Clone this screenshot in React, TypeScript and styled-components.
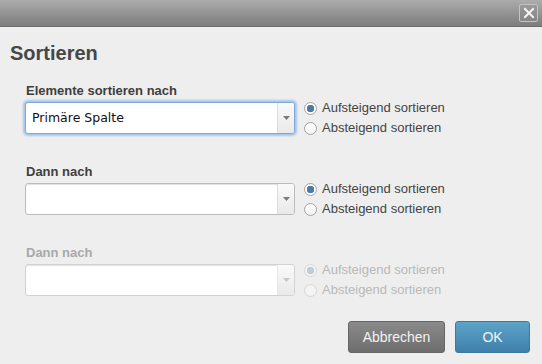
import styled, { createGlobalStyle } from "styled-components";

const GlobalStyle = createGlobalStyle`
    body {
        margin: 0;
        background: #eeeeee;
        font-family: "Liberation Sans", Arial, sans-serif;
    }
`;

type SortSection = {
    label: string;
    value: string;
    focused?: boolean;
    disabled?: boolean;
};

const sections: SortSection[] = [
    { label: "Elemente sortieren nach", value: "Primäre Spalte", focused: true },
    { label: "Dann nach", value: "" },
    { label: "Dann nach", value: "", disabled: true },
];

const Radio = ({
    checked,
    disabled,
    children,
}: {
    checked?: boolean;
    disabled?: boolean;
    children: string;
}) => (
    <RadioRow disabled={disabled}>
        <RadioCircle checked={checked} disabled={disabled} />
        {children}
    </RadioRow>
);

export default function App() {
    return (
        <>
            <GlobalStyle />
            <Dialog>
                <TitleBar>
                    <CloseButton>
                        <svg width="12" height="12" viewBox="0 0 12 12">
                            <path
                                d="M2 2 L10 10 M10 2 L2 10"
                                stroke="#f4f4f4"
                                strokeWidth="2"
                                strokeLinecap="square"
                            />
                        </svg>
                    </CloseButton>
                </TitleBar>
                <Heading>Sortieren</Heading>
                <Form>
                    {sections.map((s, ind) => (
                        <Section key={ind}>
                            <Label disabled={s.disabled}>{s.label}</Label>
                            <Row>
                                <Select focused={s.focused} disabled={s.disabled}>
                                    <SelectValue>{s.value}</SelectValue>
                                    <SelectArrow disabled={s.disabled}>
                                        <svg width="7" height="4" viewBox="0 0 7 4">
                                            <path d="M0 0 L7 0 L3.5 4 Z" fill="currentColor" />
                                        </svg>
                                    </SelectArrow>
                                </Select>
                                <RadioGroup>
                                    <Radio checked disabled={s.disabled}>
                                        Aufsteigend sortieren
                                    </Radio>
                                    <Radio disabled={s.disabled}>Absteigend sortieren</Radio>
                                </RadioGroup>
                            </Row>
                        </Section>
                    ))}
                </Form>
                <Footer>
                    <Button>Abbrechen</Button>
                    <Button primary>OK</Button>
                </Footer>
            </Dialog>
        </>
    );
}

const Dialog = styled.div`
    width: 542px;
    height: 364px;
    background: #eeeeee;
    display: flex;
    flex-direction: column;
    box-sizing: border-box;
`;

const TitleBar = styled.div`
    height: 27px;
    flex-shrink: 0;
    background: linear-gradient(#acacac, #7c7c7c);
    border-bottom: 1px solid #6e6e6e;
    box-sizing: border-box;
    display: flex;
    justify-content: flex-end;
    align-items: center;
    padding-right: 4px;
`;

const CloseButton = styled.div`
    width: 19px;
    height: 18px;
    box-sizing: border-box;
    border: 1px solid #c4c4c4;
    border-radius: 2px;
    background: linear-gradient(#9a9a9a, #868686);
    display: flex;
    align-items: center;
    justify-content: center;
`;

const Heading = styled.h1`
    margin: 14px 0 0 10px;
    font-size: 20px;
    line-height: 24px;
    font-weight: 700;
    color: #474747;
`;

const Form = styled.div`
    margin-top: 18px;
    padding-left: 25px;
    display: flex;
    flex-direction: column;
    gap: 28px;
`;

const Section = styled.div`
    display: flex;
    flex-direction: column;
    gap: 3px;
`;

const Label = styled.div<{ disabled?: boolean }>`
    padding-left: 1px;
    font-size: 13px;
    line-height: 16px;
    font-weight: 700;
    color: ${(p) => (p.disabled ? "#a9a9a9" : "#3e3e3e")};
`;

const Row = styled.div`
    display: flex;
    align-items: flex-start;
`;

const Select = styled.div<{ focused?: boolean; disabled?: boolean }>`
    width: 270px;
    height: 32px;
    box-sizing: border-box;
    display: flex;
    background: #ffffff;
    border: 1px solid ${(p) => (p.focused ? "#7ea9d6" : p.disabled ? "#d2d2d2" : "#bdbdbd")};
    border-radius: 3px;
    box-shadow: ${(p) =>
        p.focused
            ? "0 0 2px 2px #a6c6ea"
            : "inset 0 1px 1px rgba(0, 0, 0, 0.12)"};
`;

const SelectValue = styled.div`
    flex: 1;
    padding-left: 6px;
    font-family: "DejaVu Sans", sans-serif;
    font-size: 12.5px;
    line-height: 30px;
    color: #111;
`;

const SelectArrow = styled.div<{ disabled?: boolean }>`
    width: 16px;
    border-left: 1px solid ${(p) => (p.disabled ? "#e6e6e6" : "#dcdcdc")};
    background: linear-gradient(#fafafa, #e9e9e9);
    border-radius: 0 2px 2px 0;
    display: flex;
    align-items: center;
    justify-content: center;
    color: ${(p) => (p.disabled ? "#c8c8c8" : "#7a7a7a")};
`;

const RadioGroup = styled.div`
    margin-left: 9px;
    margin-top: -2px;
    display: flex;
    flex-direction: column;
    gap: 4px;
`;

const RadioRow = styled.div<{ disabled?: boolean }>`
    display: flex;
    align-items: center;
    gap: 5px;
    font-size: 13px;
    line-height: 16px;
    color: ${(p) => (p.disabled ? "#b9b9b9" : "#444444")};
`;

const RadioCircle = styled.span<{ checked?: boolean; disabled?: boolean }>`
    width: 13px;
    height: 13px;
    box-sizing: border-box;
    border-radius: 50%;
    border: 1px solid ${(p) => (p.disabled ? "#d6d6d6" : "#a4a4a4")};
    background: ${(p) =>
        p.checked
            ? p.disabled
                ? "radial-gradient(circle, #c2ccd6 0 3.5px, #f4f4f4 4px)"
                : "radial-gradient(circle, #4b7aa6 0 3.5px, #ffffff 4px)"
            : p.disabled
            ? "#f4f4f4"
            : "linear-gradient(#ffffff, #f2f2f2)"};
`;

const Footer = styled.div`
    margin-top: auto;
    padding: 0 12px 11px 0;
    display: flex;
    justify-content: flex-end;
    gap: 10px;
`;

const Button = styled.div<{ primary?: boolean }>`
    width: ${(p) => (p.primary ? "75px" : "97px")};
    height: 32px;
    box-sizing: border-box;
    border-radius: 3px;
    border: 1px solid ${(p) => (p.primary ? "#3d7aa1" : "#666666")};
    background: ${(p) =>
        p.primary
            ? "linear-gradient(#5da3c9, #3f80ab)"
            : "linear-gradient(#8a8a8a, #6e6e6e)"};
    color: #f2f2f2;
    font-size: 14px;
    display: flex;
    align-items: center;
    justify-content: center;
`;
